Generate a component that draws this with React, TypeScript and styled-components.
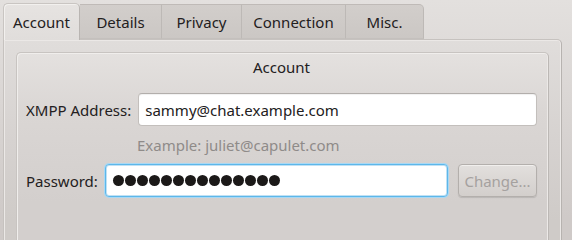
import React from "react";
import styled, { createGlobalStyle } from "styled-components";

const Global = createGlobalStyle`
  html {
    margin: 0;
    padding: 0;
    height: 100%;
    overflow: hidden;
    background: #cfcac8;
  }
  body {
    margin: 0;
    padding: 0;
    height: 100%;
    overflow: hidden;
    background: linear-gradient(to bottom, #e3e0de 0px, #d9d5d3 110px, #cfcac8 218px) no-repeat;
    background-color: #cfcac8;
    font-family: "Noto Sans", "Open Sans", sans-serif;
    font-size: 15px;
    color: #232021;
  }
  #root { height: 100%; }
`;

const Window = styled.div`
  height: 100%;
  min-height: 218px;
  padding: 3px 10px 0 3px;
  box-sizing: border-box;
  display: flex;
  flex-direction: column;
  overflow: hidden;
`;

const TabBar = styled.div`
  display: flex;
  align-items: flex-end;
  height: 36px;
  flex: none;
  position: relative;
  z-index: 1;
`;

const Tab = styled.div<{ $active?: boolean; $w: number; $last?: boolean }>`
  box-sizing: border-box;
  width: ${(p) => p.$w}px;
  height: ${(p) => (p.$active ? 37 : 35)}px;
  margin-bottom: ${(p) => (p.$active ? -1 : 0)}px;
  display: flex;
  align-items: center;
  justify-content: center;
  padding-bottom: ${(p) => (p.$active ? 1 : 0)}px;
  background: ${(p) =>
    p.$active
      ? "linear-gradient(to bottom, #e6e3e1, #e0dddb)"
      : "linear-gradient(to bottom, #d2cecb, #cbc7c4)"};
  border: 1px solid ${(p) => (p.$active ? "#c9c5c2" : "#bfbab7")};
  border-bottom: ${(p) => (p.$active ? "none" : "1px solid #c4c0bd")};
  border-left: ${(p) => (p.$active ? "1px solid #c9c5c2" : "none")};
  border-right: 1px solid ${(p) => (p.$active ? "#b9b5b2" : "#bdb9b6")};
  border-radius: ${(p) => (p.$active ? "5px 5px 0 0" : p.$last ? "0 5px 0 0" : "0")};
  box-shadow: ${(p) => (p.$active ? "inset 1px 1px 0 #f2f0ee" : "none")};
  color: #232021;
  white-space: nowrap;
`;

const Pane = styled.div`
  box-sizing: border-box;
  flex: 1;
  border: 1px solid #c6c2bf;
  border-right-color: #b7b3b0;
  border-bottom: none;
  border-radius: 0 5px 0 0;
  box-shadow: inset 1px 1px 0 #ebe8e6, inset -1px 0 0 #ebe8e6;
  background: linear-gradient(to bottom, #e0dddb 0px, #d6d2d0 100px, #cfcbc8 180px) no-repeat;
  background-color: #cfcbc8;
  padding: 12px 12px 0 12px;
  display: flex;
  flex-direction: column;
`;

const GroupBox = styled.div`
  box-sizing: border-box;
  flex: 1;
  border: 1px solid #c8c4c1;
  border-right-color: #bcb8b5;
  border-bottom: none;
  border-radius: 5px 5px 0 0;
  box-shadow: inset 1px 1px 0 #f0eeec, inset -1px 0 0 #ece9e7;
  background: linear-gradient(to bottom, #e4e1df 0px, #dad6d4 60px, #d3cfcd 150px) no-repeat;
  background-color: #d3cfcd;
  padding: 1px 11px 0 9px;
  display: flex;
  flex-direction: column;
`;

const Title = styled.div`
  text-align: center;
  height: 26px;
  line-height: 26px;
  margin-bottom: 13px;
`;

const Row = styled.div`
  display: flex;
  align-items: center;
  height: 33px;
  flex: none;
`;

const Label = styled.span`
  white-space: nowrap;
  margin-right: 7px;
`;

const Input = styled.div<{ $focused?: boolean }>`
  box-sizing: border-box;
  flex: 1;
  height: 33px;
  background: #ffffff;
  border: 1px solid ${(p) => (p.$focused ? "#5db7ea" : "#c3bfbc")};
  border-top-color: ${(p) => (p.$focused ? "#5db7ea" : "#b2aeab")};
  border-radius: 4px;
  box-shadow: ${(p) =>
    p.$focused ? "0 0 0 1px #a9d8f3, inset 0 0 0 1px #bfe1f5" : "inset 0 1px 1px rgba(0,0,0,0.06)"};
  display: flex;
  align-items: center;
  padding-left: 6px;
  color: #232021;
  white-space: nowrap;
  overflow: hidden;
`;

const Hint = styled.div`
  color: #8f8b89;
  padding-left: 111px;
  height: 38px;
  line-height: 38px;
  flex: none;
`;

const Dots = styled.div`
  display: flex;
  gap: 1px;
  padding-left: 1px;
`;

const Dot = styled.span`
  width: 11px;
  height: 11px;
  border-radius: 50%;
  background: #1b1918;
`;

const Button = styled.button`
  box-sizing: border-box;
  margin-left: 10px;
  width: 79px;
  height: 33px;
  border: 1px solid #b3afac;
  border-radius: 4px;
  background: linear-gradient(to bottom, #e2dfdd, #d3cfcc);
  box-shadow: inset 0 1px 0 #f1efed, 0 1px 1px rgba(0,0,0,0.12);
  font-family: inherit;
  font-size: 15px;
  color: #a5a19f;
  padding: 0;
`;

const tabs: { label: string; w: number }[] = [
  { label: "Account", w: 77 },
  { label: "Details", w: 82 },
  { label: "Privacy", w: 80 },
  { label: "Connection", w: 104 },
  { label: "Misc.", w: 78 },
];

export default function App() {
  return (
    <>
      <Global />
      <Window>
        <TabBar>
          {tabs.map((t, i) => (
            <Tab key={t.label} $w={t.w} $active={i === 0} $last={i === tabs.length - 1}>
              {t.label}
            </Tab>
          ))}
        </TabBar>
        <Pane>
          <GroupBox>
            <Title>Account</Title>
            <Row>
              <Label>XMPP Address:</Label>
              <Input>sammy@chat.example.com</Input>
            </Row>
            <Hint>Example: juliet@capulet.com</Hint>
            <Row>
              <Label>Password:</Label>
              <Input $focused>
                <Dots>
                  {Array.from({ length: 14 }).map((_, i) => (
                    <Dot key={i} />
                  ))}
                </Dots>
              </Input>
              <Button disabled>Change...</Button>
            </Row>
          </GroupBox>
        </Pane>
      </Window>
    </>
  );
}
